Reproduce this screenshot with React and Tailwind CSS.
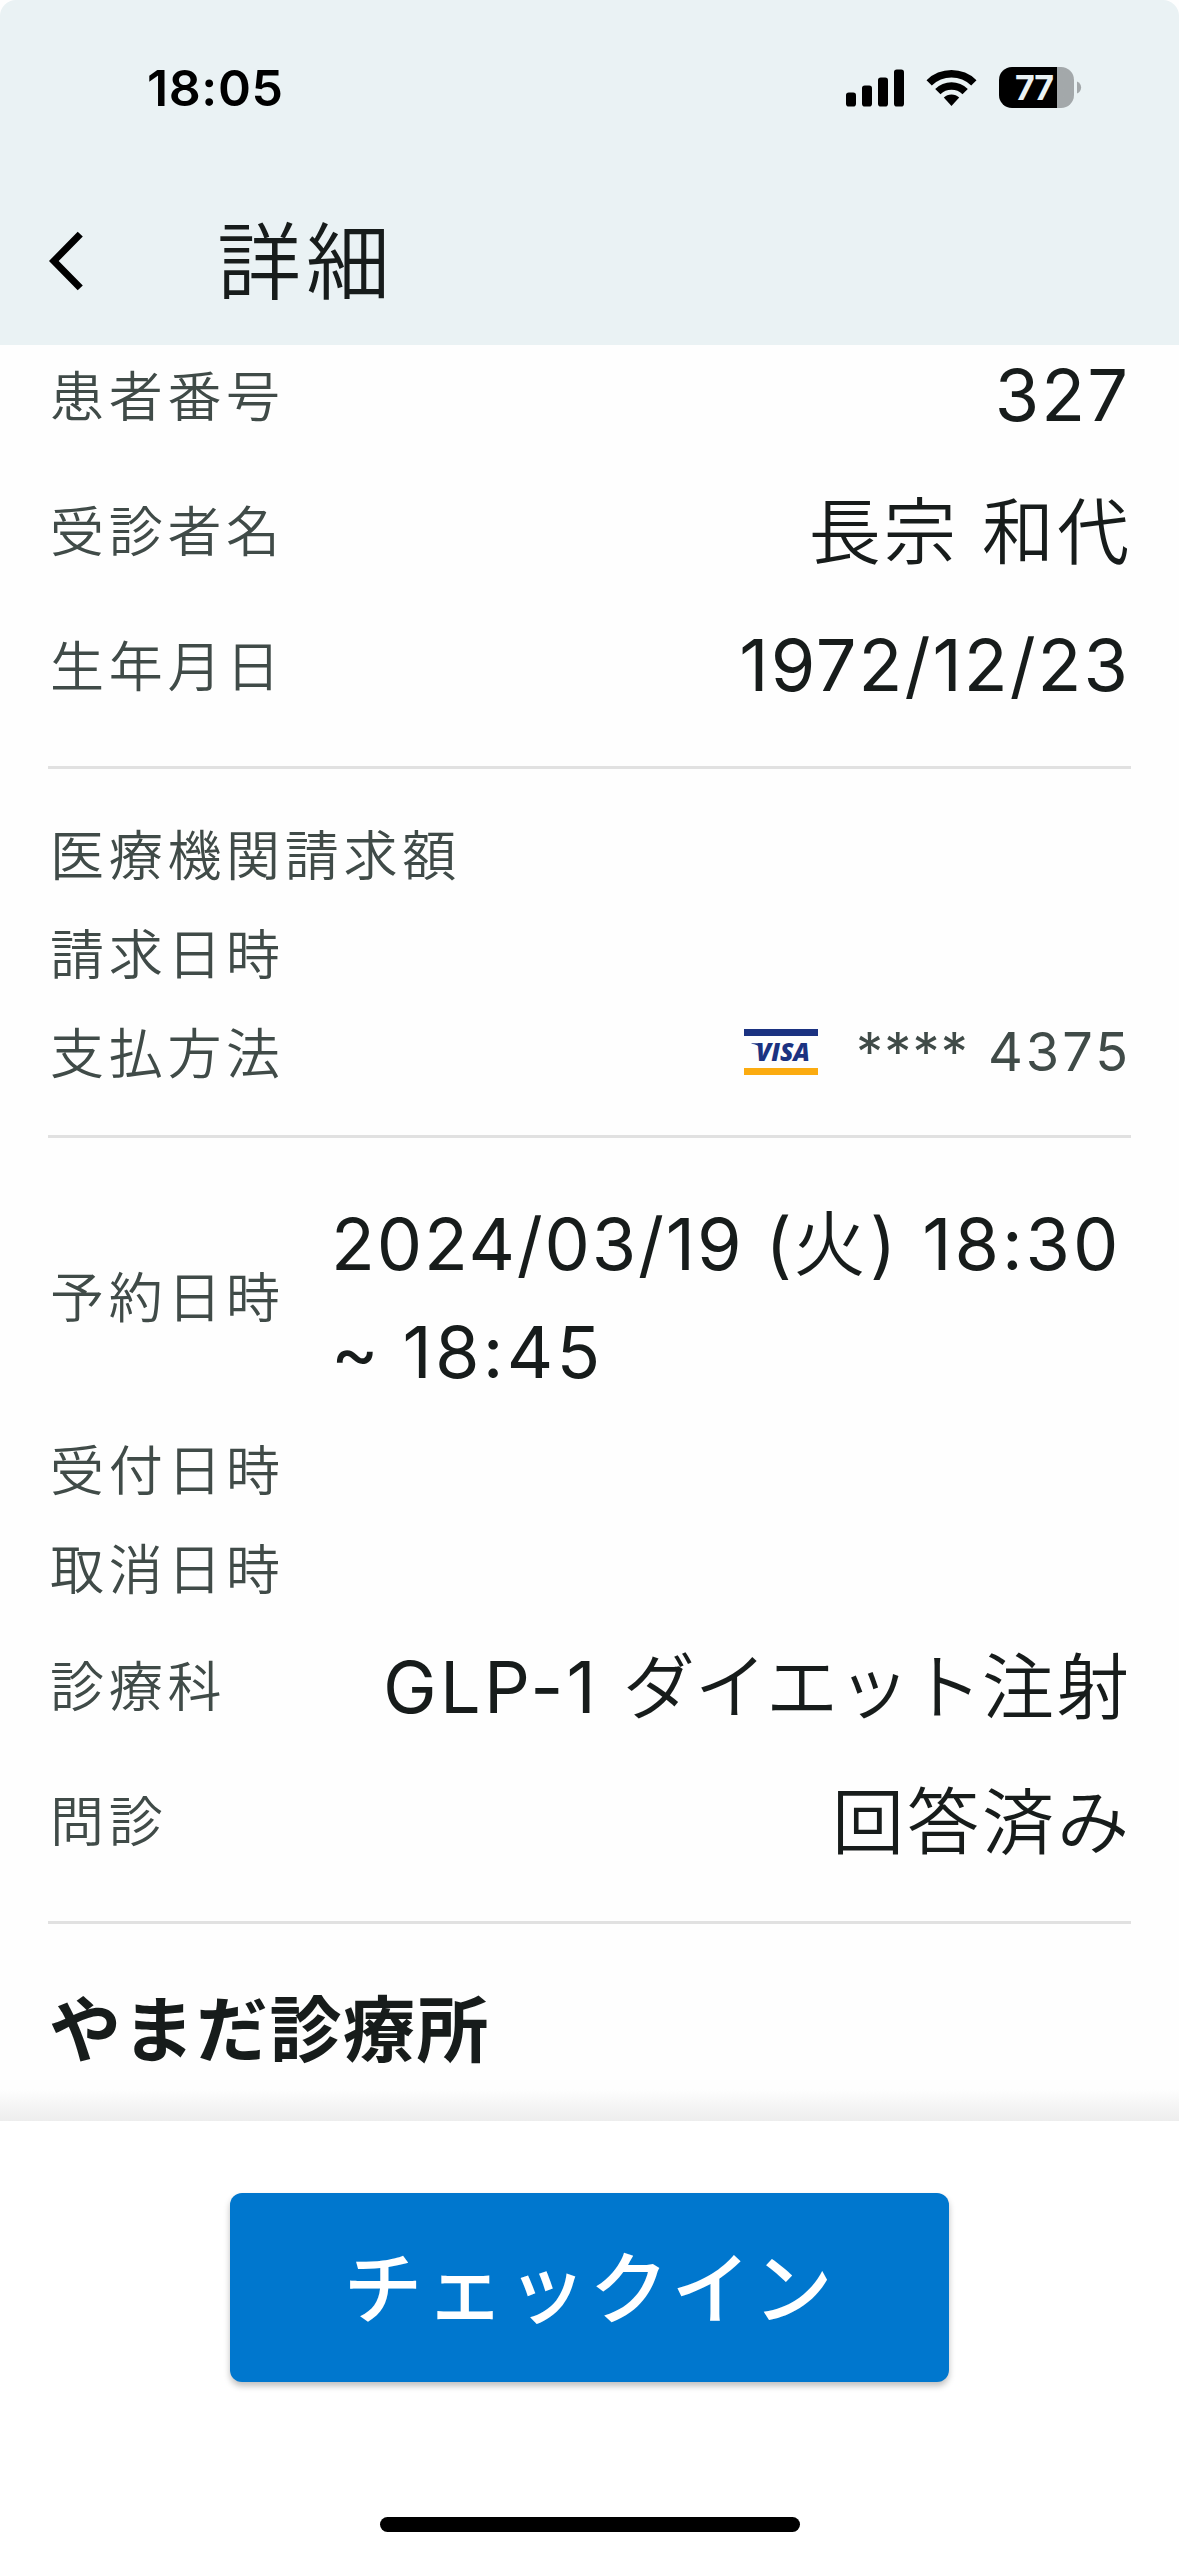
import React from 'react';

const patient = [
  { label: '患者番号', value: '327', latin: true },
  { label: '受診者名', value: '長宗 和代' },
  { label: '生年月日', value: '1972/12/23', latin: true },
];

const StatusBar = () => (
  <div className="flex h-[177px] items-start justify-between pl-[147px] pr-[97px]">
    <span className="mt-[58px] text-[50px] leading-[60px] font-semibold tracking-[0.6px] text-black">18:05</span>
    <div className="mt-[67px] flex h-[41px] items-center">
      <svg className="mr-[21px] h-[38px] w-[59px]" viewBox="0 0 59 38">
        <rect x="0" y="23.5" width="10" height="14" rx="2.8" />
        <rect x="16" y="16.5" width="10" height="21" rx="2.8" />
        <rect x="32" y="8.5" width="10" height="29" rx="2.8" />
        <rect x="48" y="0.5" width="10" height="37" rx="2.8" />
      </svg>
      <svg className="mr-[22px] h-[38px] w-[51px]" viewBox="0 0 51 38">
        <path d="M0.5 11.2 A35.5 35.5 0 0 1 50.5 11.2 L45.2 16.5 A28 28 0 0 0 5.8 16.5 Z" />
        <path d="M9.2 20 A23.3 23.3 0 0 1 41.8 20 L36.5 25.2 A15.8 15.8 0 0 0 14.5 25.2 Z" />
        <path d="M17.8 28.6 A11 11 0 0 1 33.2 28.6 L25.5 37 Z" />
      </svg>
      <div className="flex h-[41px] w-[75px] items-center justify-center overflow-hidden rounded-[13px] bg-gradient-to-r from-black from-[77%] to-[#a3a8aa] to-[77%]">
        <span className="pr-[5px] text-[34px] leading-[41px] font-bold tracking-[-1px] text-[#eaf2f4]">77</span>
      </div>
      <svg className="ml-[3px] h-[13px] w-[5px]" viewBox="0 0 5 13">
        <path d="M0 0.5 C5.5 2.5 5.5 10.5 0 12.5 Z" fill="#a3a8aa" />
      </svg>
    </div>
  </div>
);

const VisaLogo = () => (
  <svg className="h-[46px] w-[74px]" viewBox="0 0 74 46">
    <rect width="74" height="7" fill="#1b3281" />
    <rect y="39" width="74" height="7" fill="#fbab10" />
    <text x="12" y="32" textLength="54" lengthAdjust="spacingAndGlyphs" fontFamily="Open Sans, sans-serif" fontSize="25" fontWeight="800" fontStyle="italic" fill="#1b3281">VISA</text>
    <path d="M7.5 14.2 H15 L18 21 C14.5 16.5 11.5 15.2 7.5 14.8 Z" fill="#1b3281" />
  </svg>
);

const Label = ({ children }) => (
  <span className="shrink-0 pt-[2px] text-[54px] leading-[72px] tracking-[4.7px] text-[#404b48]">{children}</span>
);

const Row = ({ label, tall, children }) => (
  <div className={`flex items-center justify-between px-[2px] ${tall ? 'h-[135px]' : 'h-[99px]'}`}>
    <Label>{label}</Label>
    {children}
  </div>
);

const Value = ({ latin, children }) => (
  <span className={`text-[72px] leading-[108px] text-[#171c1b] ${latin ? 'pb-[3px] font-[390] tracking-[2px] mr-[-1px]' : 'tracking-[3px] mr-[-3px]'}`}>{children}</span>
);

const Divider = () => <div className="mt-[32px] mb-[37px] h-[3px] bg-[#e1e1e1]" />;

const App = () => {
  return (
    <div className="flex h-[2556px] w-[1179px] flex-col overflow-hidden bg-[#fefefe] font-['Inter','Noto_Sans_CJK_JP',sans-serif] font-[350]">
      <header className="h-[345px] shrink-0 rounded-t-[16px] bg-[#eaf2f4]">
        <StatusBar />
        <div className="flex h-[168px] items-center pl-[48px]">
          <svg className="h-[60px] w-[36px]" viewBox="0 0 36 60">
            <path d="M29.7 0.7 L34.8 5.6 L10.7 30 L34.8 54.4 L29.7 59.3 L1 30 Z" />
          </svg>
          <h1 className="ml-[133px] pt-[4px] text-[84px] leading-[108px] tracking-[5px] text-[#171c1b]">詳細</h1>
        </div>
      </header>

      <main className="relative flex-1 overflow-hidden px-[48px]">
        <div className="-mt-[16px]">
          {patient.map((item) => (
            <Row key={item.label} label={item.label} tall>
              <Value latin={item.latin}>{item.value}</Value>
            </Row>
          ))}
        </div>
        <Divider />
        <Row label="医療機関請求額" />
        <Row label="請求日時" />
        <Row label="支払方法">
          <div className="mr-[-2px] flex items-center pb-[3px] font-[390] text-[#404b48]">
            <VisaLogo />
            <span className="ml-[38px] text-[54px] leading-[72px] tracking-[1.2px]">****</span>
            <span className="ml-[19px] text-[54px] leading-[72px] tracking-[3px]">4375</span>
          </div>
        </Row>
        <Divider />
        <div className="flex h-[246px] items-center pl-[2px]">
          <div className="flex w-[281px] shrink-0">
            <Label>予約日時</Label>
          </div>
          <span className="text-[72px] leading-[108px] tracking-[1.8px] whitespace-nowrap text-[#171c1b]">
            <span className="font-[390]">2024/03/19 (</span>
            <span className="tracking-[4.5px]">火</span>
            <span className="font-[390] tracking-[2.9px]">) 18:30</span>
            <br />
            <span className="font-[390]">~ <span className="tracking-[3.2px]">18:45</span></span>
          </span>
        </div>
        <Row label="受付日時" />
        <Row label="取消日時" />
        <Row label="診療科" tall>
          <Value>
            <span className="font-[390] tracking-[3.3px]">GLP-1 </span>
            <span className="tracking-normal">ダイエット</span>注射
          </Value>
        </Row>
        <Row label="問診" tall>
          <Value>回答済み</Value>
        </Row>
        <Divider />
        <h2 className="pt-[15px] pl-[1px] text-[72px] leading-[108px] font-bold tracking-[1.5px] text-[#171c1b]">やまだ診療所</h2>
        <div className="absolute inset-x-0 bottom-0 h-[32px] bg-gradient-to-b from-transparent to-[#ededed]" />
      </main>

      <footer className="flex h-[435px] shrink-0 flex-col items-center justify-between bg-white pt-[72px] pb-[24px]">
        <button type="button" className="h-[189px] w-[719px] rounded-[12px] bg-[#0077ce] pt-[2px] text-[79px] leading-[108px] font-medium tracking-[3px] text-white shadow-[0_4px_6px_rgba(0,0,0,0.25)]">
          チェックイン
        </button>
        <div className="h-[15px] w-[420px] rounded-full bg-black" />
      </footer>
    </div>
  );
};

export default App;
